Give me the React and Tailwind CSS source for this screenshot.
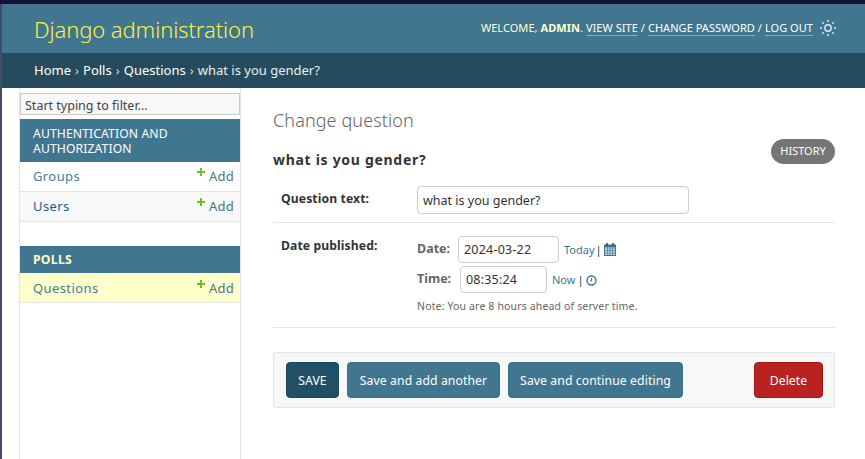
import React from "react";

const font = { fontFamily: '"Noto Sans", "Open Sans", sans-serif' };

function Row({ name, bg, color, nudge = "pt-[5px]" }) {
  return (
    <div className={`flex justify-between h-[30px] pl-[13px] pr-[6px] border-b border-[#e5e5e5] text-[13px] ${bg} ${color}`}>
      <span className={`${nudge} tracking-[0.4px]`}>{name}</span>
      <span className={`flex items-start ${nudge} tracking-[0.2px]`}>
        <svg width="8" height="8" viewBox="0 0 8 8" className="mt-[1px] mr-[4px]"><path d="M3 0h2v3h3v2H5v3H3V5H0V3h3z" fill="#70bf2b" /></svg>
        <span className="text-[#417690]">Add</span>
      </span>
    </div>
  );
}

function Btn({ children, cls }) {
  return <button className={`h-[36px] pt-[2px] rounded-[4px] text-white text-[12.2px] tracking-[0.1px] border ${cls}`}>{children}</button>;
}

export default function App() {
  return (
    <div className="w-[865px] h-[459px] overflow-hidden flex flex-col bg-white" style={font}>
      <div className="h-[4px] bg-[#0a1538] shrink-0" />
      <div className="flex flex-1 min-h-0">
        <div className="w-[2px] bg-[#434c66] shrink-0" />
        <div className="flex-1 flex flex-col min-w-0">
          <header className="h-[49px] bg-[#417690] border-t border-[#5b6b84] flex items-center justify-between pl-[32px] pr-[29px] shrink-0">
            <div className="text-[22px] font-light text-[#fff03c] leading-none tracking-[-0.1px]">Django administration</div>
            <div className="flex items-center text-[11px] text-[#ffc] uppercase tracking-[0.05px] -mt-[2px]">
              <span>Welcome, <b>admin</b>.&nbsp;</span>
              <span className="text-white border-b border-[#79aec8] leading-[15px]">View site</span>
              <span>&nbsp;/&nbsp;</span>
              <span className="text-white border-b border-[#79aec8] leading-[15px]">Change password</span>
              <span>&nbsp;/&nbsp;</span>
              <span className="text-white border-b border-[#79aec8] leading-[15px]">Log out</span>
              <svg width="16" height="16" viewBox="0 0 16 16" className="ml-[7px]" fill="none" stroke="#d6ecf7" strokeWidth="1.4">
                <circle cx="8" cy="8" r="3.2" />
                <path d="M8 0v2M8 14v2M0 8h2M14 8h2M2.3 2.3l1.4 1.4M12.3 12.3l1.4 1.4M2.3 13.7l1.4-1.4M12.3 3.7l1.4-1.4" />
              </svg>
            </div>
          </header>
          <nav className="h-[35px] bg-[#264b5d] flex items-center pl-[32px] text-[13px] text-white shrink-0">
            Home<span className="text-[#c4dce8] mx-[4px]">›</span>Polls<span className="text-[#c4dce8] mx-[4px]">›</span>Questions<span className="text-[#c4dce8] mx-[4px]">›</span><span className="text-[#e6f0f5]">what is you gender?</span>
          </nav>
          <div className="flex flex-1 min-h-0">
            <aside className="ml-[17px] w-[222px] border-x border-[#e5e5e5] pt-[5px] shrink-0">
              <input readOnly placeholder="Start typing to filter..." className="block w-full h-[22px] bg-[#f8f8f8] border border-[#ccc] px-[4px] pt-[2px] text-[12.5px] text-[#333] placeholder:text-[#444] outline-none" />
              <div className="mt-[4px] h-[43px] bg-[#417690] text-white text-[12.2px] leading-[15px] pl-[13px] pt-[7px] uppercase tracking-[0.1px]">Authentication and<br />Authorization</div>
              <Row name="Groups" bg="bg-white" color="text-[#447e9b]" />
              <Row name="Users" bg="bg-[#f8f8f8]" color="text-[#1f6180]" />
              <div className="mt-[24px] h-[27px] bg-[#417690] text-[#ffc] text-[12.2px] font-bold flex items-center pl-[13px] pt-[1px] tracking-[0.3px]">POLLS</div>
              <Row name="Questions" bg="bg-[#ffc]" color="text-[#447e9b]" nudge="pt-[6px]" />
            </aside>
            <main className="flex-1 pl-[32px] pr-[30px] min-w-0">
              <h1 className="text-[18px] font-light text-[#666] mt-[20px] leading-[25px] tracking-[0.1px]">Change question</h1>
              <div className="flex justify-between items-start mt-[1px]">
                <h2 className="text-[14px] font-bold text-[#333] mt-[16px] leading-[20px] tracking-[0.7px]">what is you gender?</h2>
                <span className="mt-[5px] h-[25px] w-[64px] rounded-full bg-[#757575] text-white text-[11px] flex items-center justify-center">HISTORY</span>
              </div>
              <div className="flex h-[53px] border-b border-[#e5e5e5] pl-[8px] items-start">
                <label className="w-[136px] text-[12.2px] font-bold text-[#333] pt-[20px] tracking-[0.1px]">Question text:</label>
                <input readOnly value="what is you gender?" className="w-[272px] h-[28px] mt-[16px] border border-[#ccc] rounded-[4px] px-[5px] text-[12.5px] text-[#333] outline-none" />
              </div>
              <div className="flex h-[105px] border-b border-[#e5e5e5] pl-[8px]">
                <label className="w-[136px] text-[12.2px] font-bold text-[#333] pt-[14px] tracking-[0.1px]">Date published:</label>
                <div className="pt-[13px]">
                  <div className="flex items-center h-[27px]">
                    <span className="text-[12.5px] font-bold text-[#666] w-[41px]">Date:</span>
                    <input readOnly value="2024-03-22" className="w-[101px] h-[27px] border border-[#ccc] rounded-[4px] px-[5px] text-[12.5px] text-[#333] outline-none tracking-[0.2px]" />
                    <span className="ml-[5px] pt-[1px] text-[11px] text-[#417690]">Today</span>
                    <span className="ml-[1px] mr-[2px] pt-[1px] text-[11px] text-[#333]">|</span>
                    <svg width="12" height="13" viewBox="0 0 12 13"><rect x="0.5" y="2.5" width="11" height="10" fill="#bcd4e2" stroke="#417690" /><path d="M0 5h12M0 7.5h12M0 10h12M3.5 3v9M6 3v9M8.5 3v9" stroke="#417690" strokeWidth="0.6" /><rect x="0" y="1.5" width="12" height="2.5" fill="#417690" /><path d="M3 0v3M9 0v3" stroke="#264b5d" strokeWidth="1.5" /></svg>
                  </div>
                  <div className="flex items-center h-[27px] mt-[3px]">
                    <span className="text-[12.5px] font-bold text-[#666] w-[43px]">Time:</span>
                    <input readOnly value="08:35:24" className="w-[87px] h-[27px] border border-[#ccc] rounded-[4px] px-[5px] text-[12.5px] text-[#333] outline-none tracking-[0.2px]" />
                    <span className="ml-[5px] pt-[1px] text-[11px] text-[#417690]">Now</span>
                    <span className="ml-[2px] mr-[2px] pt-[1px] text-[11px] text-[#333]">|</span>
                    <svg width="11" height="11" viewBox="0 0 11 11" className="mt-[2px]" fill="none" stroke="#417690"><circle cx="5.5" cy="5.5" r="4.5" strokeWidth="1.4" /><path d="M5.5 3v3L4 6" strokeWidth="1" /></svg>
                  </div>
                  <p className="text-[10.5px] text-[#666] mt-[6px] leading-[15px] tracking-[0.15px]">Note: You are 8 hours ahead of server time.</p>
                </div>
              </div>
              <div className="mt-[24px] h-[56px] bg-[#f8f8f8] border border-[#e5e5e5] rounded-[2px] flex items-center pl-[12px] pr-[11px]">
                <Btn cls="w-[53px] bg-[#205067] border-[#1b485e] uppercase">Save</Btn>
                <Btn cls="w-[153px] ml-[8px] bg-[#417690] border-[#35708c]">Save and add another</Btn>
                <Btn cls="w-[175px] ml-[8px] bg-[#417690] border-[#35708c]">Save and continue editing</Btn>
                <Btn cls="w-[69px] ml-auto bg-[#ba2121] border-[#a41515]">Delete</Btn>
              </div>
            </main>
          </div>
        </div>
      </div>
    </div>
  );
}
